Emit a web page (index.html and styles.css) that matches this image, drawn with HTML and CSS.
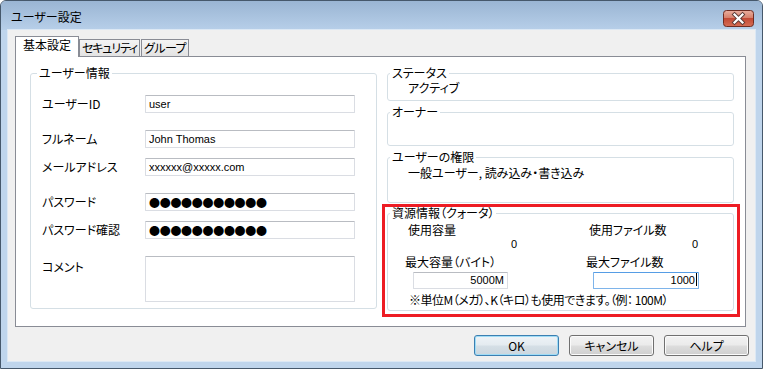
FILE: index.html
```html
<!DOCTYPE html>
<html lang="ja">
  <head>
    <meta charset="UTF-8" />
    <meta name="viewport" content="width=device-width, initial-scale=1.0" />
    <title>ユーザー設定</title>
    <link rel="stylesheet" href="styles.css">
  </head>
  <body>
    <div class="window">
      <div class="titlebar">
        <span class="title">ユーザー設定</span>
        <div class="close-btn">
          <svg width="31" height="17" viewBox="0 0 31 17">
            <defs>
              <linearGradient id="closeGrad" x1="0" y1="0" x2="0" y2="1">
                <stop offset="0" stop-color="#eab0a0" />
                <stop offset="0.45" stop-color="#d6806c" />
                <stop offset="0.5" stop-color="#c24a36" />
                <stop offset="1" stop-color="#d66e55" />
              </linearGradient>
            </defs>
            <rect x="0.5" y="0.5" width="30" height="16" rx="3" fill="url(#closeGrad)" stroke="#6e2c22" />
            <path d="M11.5 4.5 L19.5 12.5 M19.5 4.5 L11.5 12.5" stroke="#5a3a36" stroke-width="4" stroke-linecap="square" />
            <path d="M11.5 4.5 L19.5 12.5 M19.5 4.5 L11.5 12.5" stroke="#ffffff" stroke-width="2.2" stroke-linecap="square" />
          </svg>
        </div>
      </div>

      <div class="client">
        <div class="tabs">
          <div class="tab active tab-basic">基本設定</div>
          <div class="tab tab-security">セキュリティ</div>
          <div class="tab tab-group">グループ</div>
        </div>

        <div class="tab-panel">
          <fieldset class="group user-info">
            <legend>ユーザー情報</legend>
            <div class="form">
              <div class="row">
                <label>ユーザーID</label>
                <div class="textbox">user</div>
              </div>
              <div class="row spaced">
                <label>フルネーム</label>
                <div class="textbox">John Thomas</div>
              </div>
              <div class="row">
                <label>メールアドレス</label>
                <div class="textbox">xxxxxx@xxxxx.com</div>
              </div>
              <div class="row spaced">
                <label>パスワード</label>
                <div class="textbox secret">●●●●●●●●●●●</div>
              </div>
              <div class="row">
                <label>パスワード確認</label>
                <div class="textbox secret">●●●●●●●●●●●</div>
              </div>
              <div class="row spaced comment-row">
                <label>コメント</label>
                <div class="textbox memo"></div>
              </div>
            </div>
          </fieldset>

          <div class="side">
            <fieldset class="group">
              <legend>ステータス</legend>
              <div class="group-body status-body">アクティブ</div>
            </fieldset>
            <fieldset class="group">
              <legend>オーナー</legend>
              <div class="group-body owner-body"></div>
            </fieldset>
            <fieldset class="group">
              <legend>ユーザーの権限</legend>
              <div class="group-body perm-body">一般ユーザー, 読み込み・書き込み</div>
            </fieldset>

            <div class="highlight">
              <fieldset class="group quota">
                <legend>資源情報（クォータ）</legend>
                <div class="quota-body">
                  <div class="quota-cols">
                    <div class="quota-col">
                      <div class="q-label">使用容量</div>
                      <div class="q-value">0</div>
                      <div class="q-label max">最大容量（バイト）</div>
                      <div class="textbox num size-box">5000M</div>
                    </div>
                    <div class="quota-col">
                      <div class="q-label">使用ファイル数</div>
                      <div class="q-value">0</div>
                      <div class="q-label max">最大ファイル数</div>
                      <div class="textbox num count-box focused">1000<span class="caret"></span></div>
                    </div>
                  </div>
                  <div class="q-note">※単位M（メガ）、K（キロ）も使用できます。（例： 100M）</div>
                </div>
              </fieldset>
            </div>
          </div>
        </div>

        <div class="buttons">
          <button class="btn default">OK</button>
          <button class="btn">キャンセル</button>
          <button class="btn">ヘルプ</button>
        </div>
      </div>
    </div>
  </body>
</html>
```

FILE: styles.css
```css
* {
  box-sizing: border-box;
}
body {
  margin: 0;
  font-family: "Noto Sans CJK JP", sans-serif;
  font-size: 12px;
  color: #000;
  font-feature-settings: "palt";
}
.window {
  width: 763px;
  height: 369px;
  border: 1px solid #46586b;
  border-radius: 6px 6px 0 0;
  background: #bfd5ec;
  display: flex;
  flex-direction: column;
  overflow: hidden;
}
.titlebar {
  height: 29px;
  flex-shrink: 0;
  display: flex;
  align-items: flex-start;
  padding: 8px 8px 0 10px;
  background: linear-gradient(#9ab5d3, #b7cfe9);
}
.title {
  line-height: 16px;
}
.close-btn {
  margin-left: auto;
  margin-top: 1px;
  height: 17px;
}
.client {
  flex: 1;
  margin: 0 7px 7px 7px;
  background: #f0f0f0;
  padding: 6px 6px 0 7px;
  box-shadow: 0 0 0 1px #dce8f4;
}

/* tabs */
.tabs {
  display: flex;
  align-items: flex-end;
  height: 20px;
  position: relative;
  z-index: 1;
}
.tab {
  height: 17px;
  border: 1px solid #898c95;
  border-bottom: none;
  background: linear-gradient(#f4f4f4, #e3e3e3);
  line-height: 15px;
  text-align: center;
  white-space: nowrap;
  overflow: hidden;
}
.tab-basic {
  width: 64px;
}
.tab-security {
  width: 61px;
  letter-spacing: -1.2px;
}
.tab-group {
  width: 48px;
  margin-left: 1px;
  letter-spacing: -0.6px;
}
.tab.active {
  height: 21px;
  margin-bottom: -1px;
  background: #fff;
  line-height: 16px;
}
.tab-panel {
  width: 731px;
  height: 271px;
  border: 1px solid #898c95;
  background: #fff;
  display: grid;
  grid-template-columns: 347px 347px;
  column-gap: 10px;
  align-items: start;
  padding: 9px 11px 0 14px;
}

/* group boxes */
.group {
  margin: 0;
  min-width: 0;
  border: 1px solid #d5dfe5;
  border-radius: 3px;
  padding: 0 0 0 2px;
}
.group legend {
  padding: 0 2px;
  line-height: 14px;
}
.user-info {
  padding: 0 0 6px 6px;
}
.form {
  display: flex;
  flex-direction: column;
  gap: 10px;
  padding: 15px 0 0 5px;
}
.row {
  display: flex;
  align-items: center;
}
.row.spaced {
  margin-top: 7px;
}
.row label {
  width: 103px;
  line-height: 16px;
}
.comment-row {
  align-items: flex-start;
}
.comment-row label {
  margin-top: 3px;
}
.textbox {
  width: 210px;
  height: 18px;
  border: 1px solid #dadde3;
  border-top-color: #b9bcc2;
  border-radius: 1px;
  background: #fff;
  padding: 0 3px;
  font-family: "Liberation Sans", sans-serif;
  font-size: 11px;
  line-height: 16px;
  white-space: nowrap;
  overflow: hidden;
}
.textbox.secret {
  font-family: "Noto Sans CJK JP", sans-serif;
  font-feature-settings: normal;
  font-size: 11px;
  letter-spacing: -0.3px;
}
.textbox.memo {
  height: 46px;
}

/* right column */
.side {
  display: flex;
  flex-direction: column;
  gap: 4px;
}
.group-body {
  padding-left: 18px;
  line-height: 16px;
}
.status-body {
  height: 20px;
}
.owner-body {
  height: 26px;
}
.perm-body {
  height: 38px;
  padding-top: 1px;
}
.highlight {
  margin: -3px -6px 0 -5px;
  border: 3px solid #ed1c24;
  padding: 0 3px 3px 2px;
}
.quota legend {
  line-height: 12px;
}
.quota-body {
  padding: 4px 0 3px 15px;
}
.quota-cols {
  display: flex;
}
.quota-col {
  width: 181px;
  flex-shrink: 0;
  display: flex;
  flex-direction: column;
  align-items: flex-start;
}
.quota-col + .quota-col {
  width: auto;
  flex: 1;
}
.q-label {
  line-height: 14px;
  padding-left: 3px;
}
.q-label.max {
  margin-top: 4px;
  padding-left: 0;
}
.q-value {
  width: 112px;
  text-align: right;
  line-height: 14px;
  font-family: "Liberation Sans", sans-serif;
  font-size: 11px;
}
.textbox.num {
  height: 17px;
  margin-top: 3px;
  text-align: right;
  line-height: 15px;
}
.size-box {
  width: 95px;
  margin-left: 8px;
}
.count-box {
  width: 106px;
  margin-left: 7px;
  padding-right: 1px;
}
.textbox.focused {
  border-color: #7eb4ea;
  border-top-color: #569de5;
}
.caret {
  display: inline-block;
  width: 1px;
  height: 13px;
  margin-left: 1px;
  background: #000;
  vertical-align: -2px;
}
.q-note {
  margin-top: 4px;
  padding-left: 4px;
  line-height: 14px;
  letter-spacing: -0.5px;
  white-space: nowrap;
}

/* dialog buttons */
.buttons {
  display: flex;
  justify-content: flex-end;
  gap: 10px;
  margin-top: 8px;
}
.btn {
  width: 85px;
  height: 21px;
  padding: 0;
  border: 1px solid #707070;
  border-radius: 3px;
  background: linear-gradient(#f2f2f2 0%, #ebebeb 48%, #dddddd 52%, #cfcfcf 100%);
  box-shadow: inset 0 0 0 1px #fbfbfb;
  font-family: "Noto Sans CJK JP", sans-serif;
  font-size: 12px;
  font-feature-settings: "palt";
  color: #000;
  line-height: 17px;
}
.btn.default {
  border-color: #3c7fb1;
  box-shadow: inset 0 0 0 1px #9fdcf6;
  background: linear-gradient(#eef3f7 0%, #e4ebf0 48%, #d5dfe6 52%, #cbd6de 100%);
}
```
